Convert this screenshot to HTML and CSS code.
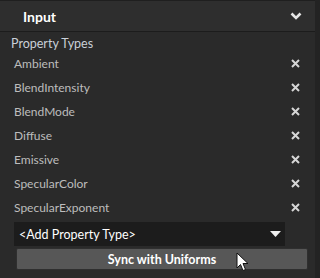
FILE: index.html
```html
<!DOCTYPE html>
<html>
<head>
  <link rel="stylesheet" href="styles.css">
</head>
<body>
  <div class="panel">
    <div class="main">
      <div class="header">
        <span class="header-title">Input</span>
        <svg class="chevron" width="12" height="8" viewBox="0 0 12 8">
          <path d="M1.5 1.5 L6 6 L10.5 1.5" fill="none" stroke="#e6e6e6" stroke-width="2.6"/>
        </svg>
      </div>
      <div class="section-title">Property Types</div>
      <div class="prop-list">
        <div class="prop-row"><span>Ambient</span><svg class="remove" width="9" height="9" viewBox="0 0 9 9"><path d="M1 1 L8 8 M8 1 L1 8"/></svg></div>
        <div class="prop-row"><span>BlendIntensity</span><svg class="remove" width="9" height="9" viewBox="0 0 9 9"><path d="M1 1 L8 8 M8 1 L1 8"/></svg></div>
        <div class="prop-row"><span>BlendMode</span><svg class="remove" width="9" height="9" viewBox="0 0 9 9"><path d="M1 1 L8 8 M8 1 L1 8"/></svg></div>
        <div class="prop-row"><span>Diffuse</span><svg class="remove" width="9" height="9" viewBox="0 0 9 9"><path d="M1 1 L8 8 M8 1 L1 8"/></svg></div>
        <div class="prop-row"><span>Emissive</span><svg class="remove" width="9" height="9" viewBox="0 0 9 9"><path d="M1 1 L8 8 M8 1 L1 8"/></svg></div>
        <div class="prop-row"><span>SpecularColor</span><svg class="remove" width="9" height="9" viewBox="0 0 9 9"><path d="M1 1 L8 8 M8 1 L1 8"/></svg></div>
        <div class="prop-row"><span>SpecularExponent</span><svg class="remove" width="9" height="9" viewBox="0 0 9 9"><path d="M1 1 L8 8 M8 1 L1 8"/></svg></div>
      </div>
      <div class="dropdown">
        <span>&lt;Add Property Type&gt;</span>
        <svg class="caret" width="11" height="6" viewBox="0 0 11 6">
          <path d="M0 0 H11 L5.5 6 Z" fill="#f0f0f0"/>
        </svg>
      </div>
      <div class="btn-wrap">
        <button class="sync">Sync with Uniforms</button>
        <svg class="cursor" width="13" height="20" viewBox="0 0 13 20">
          <path d="M1 1 V16 L4.5 12.5 L7 18.5 L9.5 17.5 L7 11.5 H12 Z" fill="#ffffff" stroke="#111" stroke-width="1"/>
        </svg>
      </div>
    </div>
    <div class="edge"></div>
  </div>
</body>
</html>
```

FILE: styles.css
```css
body {
  margin: 0;
  background: #2a2a2a;
  font-family: Lato, "Noto Sans", sans-serif;
  font-size: 12px;
}
.panel {
  display: flex;
  height: 278px;
}
.main {
  width: 315px;
  background: #2a2a2a;
}
.edge {
  width: 5px;
  background: #232323;
}
.header {
  height: 30px;
  border-top: 1px solid #1f1f1f;
  border-bottom: 1px solid #1c1c1c;
  background: #2e2e2e;
  display: flex;
  align-items: center;
  justify-content: space-between;
  padding: 0 13px 0 23px;
}
.header-title {
  color: #ffffff;
  font-weight: bold;
  font-size: 14px;
}
.chevron {
  display: block;
}
.section-title {
  color: #c9d0d8;
  padding: 4px 11px 0;
  height: 15px;
  font-size: 12.5px;
}
.prop-list {
  display: flex;
  flex-direction: column;
}
.prop-row {
  height: 24px;
  display: flex;
  align-items: center;
  justify-content: space-between;
  padding: 0 15px 0 14px;
  color: #bdbdbd;
  font-size: 12px;
}
.remove {
  display: block;
  stroke: #d6d6d6;
  stroke-width: 2;
  fill: none;
}
.dropdown {
  margin: 3px 30px 0 14px;
  height: 24px;
  background: #1c1c1c;
  display: flex;
  align-items: center;
  justify-content: space-between;
  padding: 0 4px 0 5px;
  color: #ffffff;
  font-size: 12.5px;
}
.caret {
  display: block;
}
.btn-wrap {
  position: relative;
  padding: 2px 7px 0 16px;
}
.sync {
  width: 100%;
  height: 22px;
  background: #575757;
  border: 1px solid #2f2f2f;
  border-radius: 2px;
  color: #ffffff;
  font-family: Lato, "Noto Sans", sans-serif;
  font-size: 12.5px;
  font-weight: bold;
  padding: 0;
}
.cursor {
  position: absolute;
  left: 236px;
  top: 6px;
}
```
